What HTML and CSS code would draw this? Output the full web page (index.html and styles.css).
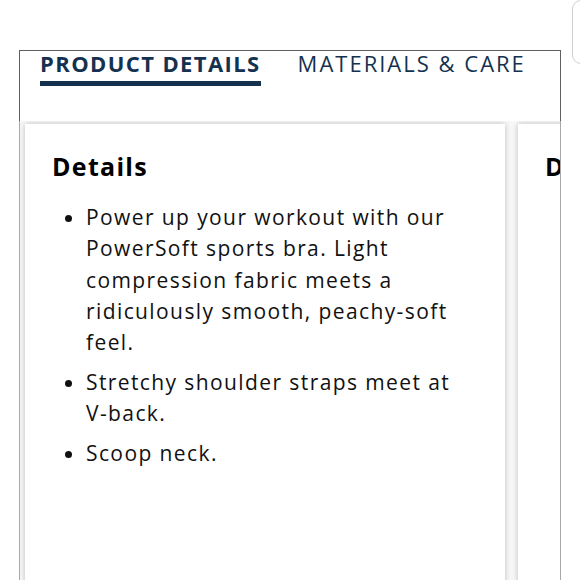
FILE: index.html
```html
<!DOCTYPE html>
<html>
<head>
<meta charset="utf-8">
<link rel="stylesheet" href="styles.css">
</head>
<body>
<div class="corner-box"></div>
<div class="frame">
  <div class="tabs">
    <div class="tab active">PRODUCT DETAILS</div>
    <div class="tab">MATERIALS &amp; CARE</div>
  </div>
  <div class="carousel">
    <div class="card">
      <h2 class="card-title">Details</h2>
      <ul class="bullets">
        <li>Power up your workout with our PowerSoft sports bra. Light compression fabric meets a ridiculously smooth, peachy-soft feel.</li>
        <li>Stretchy shoulder straps meet at <span class="nowrap">V-back.</span></li>
        <li>Scoop neck.</li>
      </ul>
    </div>
    <div class="card">
      <h2 class="card-title">Details</h2>
    </div>
  </div>
</div>
</body>
</html>
```

FILE: styles.css
```css
html, body {
  margin: 0;
  padding: 0;
  background: #ffffff;
  overflow: hidden;
  height: 580px;
}
body {
  font-family: "Open Sans", "Liberation Sans", sans-serif;
  position: relative;
}
.corner-box {
  position: absolute;
  left: 572px;
  top: 0;
  width: 40px;
  height: 64px;
  border: 1px solid #cfcfcf;
  border-radius: 9px;
  box-sizing: border-box;
}
.frame {
  margin: 50px 0 0 19px;
  width: 542px;
  box-sizing: border-box;
}
.tabs {
  display: flex;
  align-items: flex-start;
  gap: 37px;
  padding: 0 0 0 20px;
  height: 70px;
  border-top: 1px solid #5f5f5f;
  border-left: 1px solid #5f5f5f;
  border-right: 1px solid #5f5f5f;
}
.tab {
  font-size: 22px;
  line-height: 25px;
  color: #14324f;
  padding-bottom: 5px;
  letter-spacing: 2px;
}
.tab.active {
  font-weight: 700;
  letter-spacing: 1.4px;
  border-bottom: 5px solid #14324f;
}
.carousel {
  display: flex;
  gap: 13px;
  padding: 3px 0 0 5px;
  height: 460px;
  overflow: hidden;
  border-left: 1px solid #a8a8a8;
  border-right: 1px solid #a8a8a8;
  background: #f8f8f8;
}
.card {
  flex: 0 0 480px;
  background: #ffffff;
  box-shadow: 0 0 6px rgba(0, 0, 0, 0.24);
  padding: 27px 0 0 27px;
  box-sizing: border-box;
  overflow: hidden;
}
.card-title {
  margin: 0;
  font-size: 25px;
  line-height: 30px;
  font-weight: 700;
  letter-spacing: 1.3px;
  color: #000000;
  white-space: nowrap;
}
.bullets {
  margin: 21px 0 0 0;
  padding: 0 0 0 34px;
  width: 385px;
  font-size: 21px;
  line-height: 31.3px;
  letter-spacing: 1.4px;
  color: #111111;
}
.bullets li {
  margin-bottom: 8.5px;
}
.nowrap {
  white-space: nowrap;
}
```
